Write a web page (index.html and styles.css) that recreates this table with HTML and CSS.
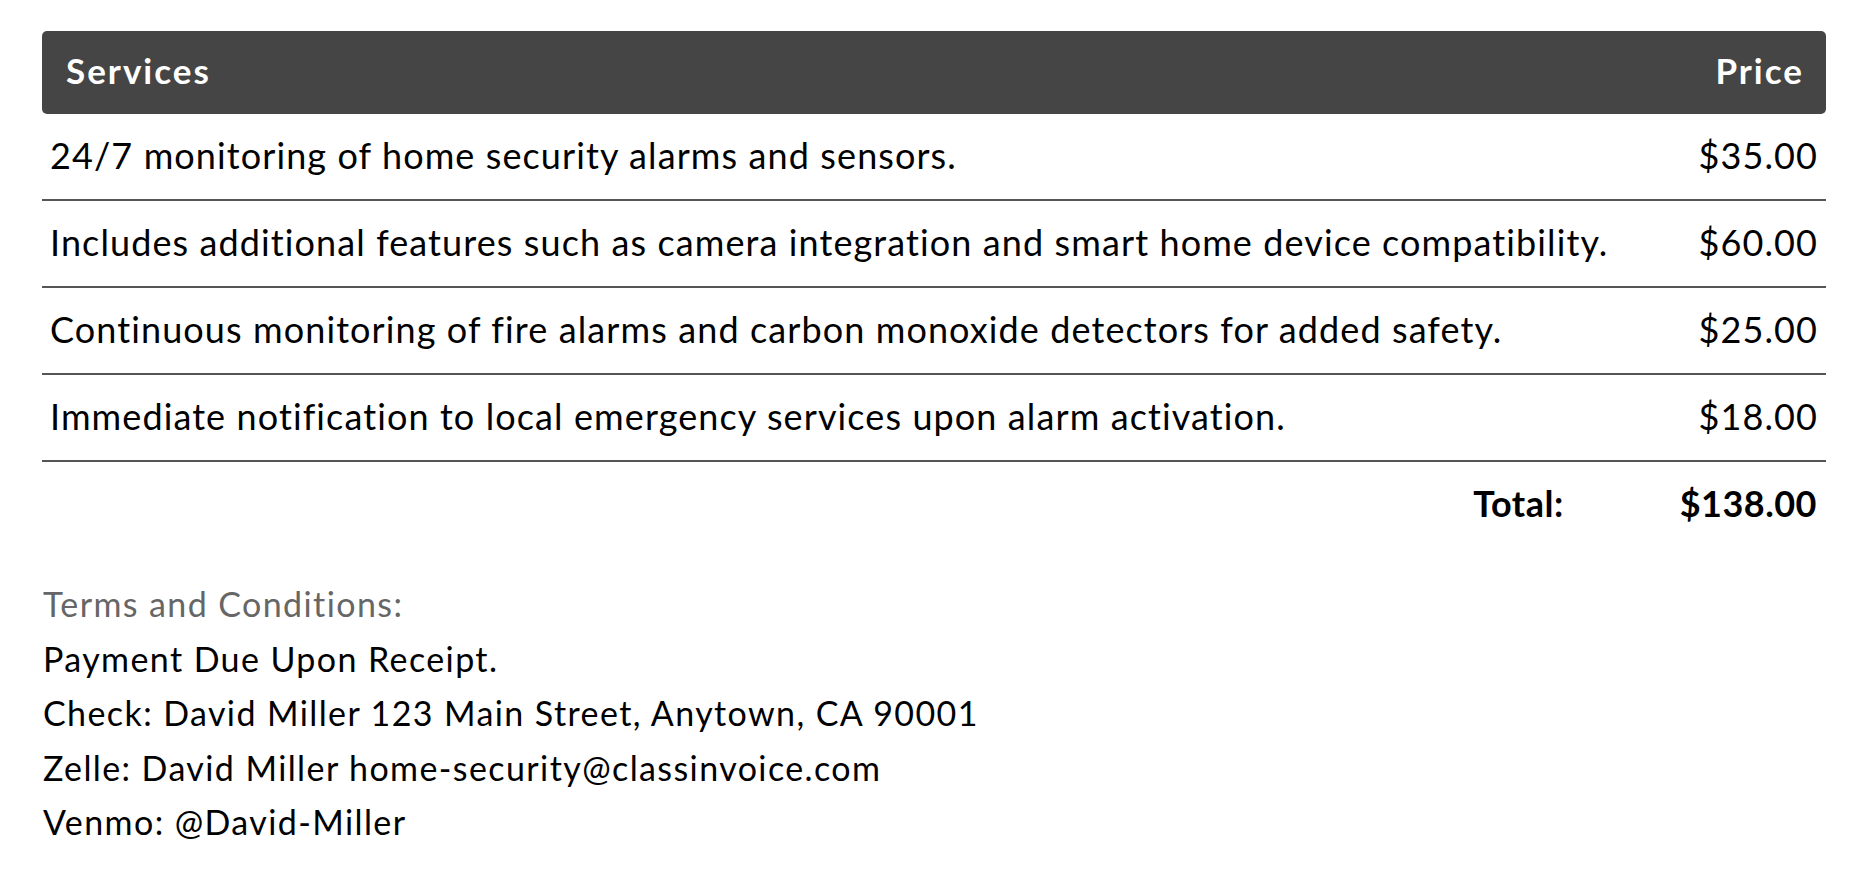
FILE: index.html
```html
<!DOCTYPE html>
<html>
<head>
<meta charset="utf-8">
<link rel="stylesheet" href="styles.css">
</head>
<body>
<div class="invoice">
  <div class="thead">
    <span>Services</span>
    <span>Price</span>
  </div>
  <div class="row"><span class="desc">24/7 monitoring of home security alarms and sensors.</span><span class="price">$35.00</span></div>
  <div class="row"><span class="desc">Includes additional features such as camera integration and smart home device compatibility.</span><span class="price">$60.00</span></div>
  <div class="row"><span class="desc">Continuous monitoring of fire alarms and carbon monoxide detectors for added safety.</span><span class="price">$25.00</span></div>
  <div class="row"><span class="desc">Immediate notification to local emergency services upon alarm activation.</span><span class="price">$18.00</span></div>
  <div class="total">
    <span class="total-label">Total:</span>
    <span class="total-value">$138.00</span>
  </div>
  <div class="terms">
    <div class="terms-title">Terms and Conditions:</div>
    <div>Payment Due Upon Receipt.</div>
    <div>Check: David Miller 123 Main Street, Anytown, CA 90001</div>
    <div>Zelle: David Miller home-security@classinvoice.com</div>
    <div>Venmo: @David-Miller</div>
  </div>
</div>
</body>
</html>
```

FILE: styles.css
```css
* { box-sizing: border-box; }
html, body { margin: 0; padding: 0; background: #fff; }
body {
  font-family: "Lato", "Open Sans", sans-serif;
  color: #000;
}
.invoice {
  width: 1784px;
  margin: 31px 0 0 42px;
}
.thead {
  height: 83px;
  background: #454545;
  border-radius: 5px;
  color: #fff;
  font-weight: 700;
  font-size: 35px;
  letter-spacing: 2px;
  display: flex;
  justify-content: space-between;
  align-items: center;
  padding: 0 22px 5px 24px;
}
.row {
  height: 87px;
  border-bottom: 2px solid #555;
  display: flex;
  justify-content: space-between;
  align-items: center;
  padding: 0 8px 3px 8px;
  font-size: 36px;
  letter-spacing: 1.1px;
}
.total {
  height: 84px;
  display: flex;
  justify-content: flex-end;
  align-items: center;
  padding: 0 9px 2px 0;
  font-size: 36px;
  font-weight: 700;
  letter-spacing: 0.5px;
  gap: 116px;
}
.terms {
  margin-top: 31px;
  padding-left: 1px;
  font-size: 34px;
  line-height: 54.5px;
  letter-spacing: 1.4px;
}
.terms-title { color: #666; }
```
